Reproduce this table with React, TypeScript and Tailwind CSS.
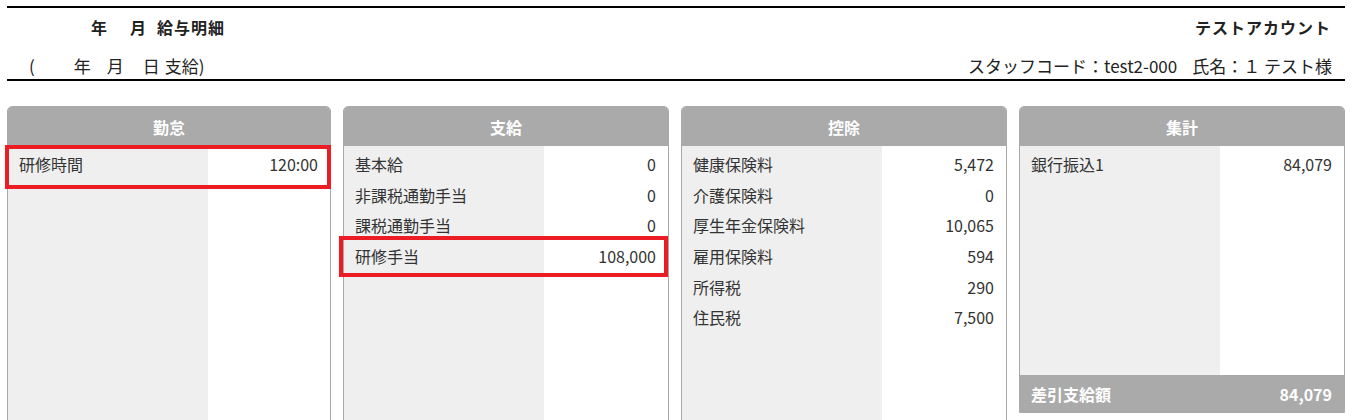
import React from "react";

type Row = { label: string; value: string };

const ROW_H = "h-[30.6px]";

function Card({
  title,
  rows,
  tall = true,
  footer,
  highlight,
}: {
  title: string;
  rows: Row[];
  tall?: boolean;
  footer?: Row;
  highlight?: React.ReactNode;
}) {
  return (
    <div className="relative">
      <div
        className={`flex flex-col border border-[#aaaaaa] rounded-t-[5px] overflow-hidden ${
          tall ? "h-[340px]" : "h-[307px]"
        }`}
      >
        <div className="h-[39px] shrink-0 bg-[#aaaaaa] flex items-center justify-center text-white font-bold text-[16px]">
          {title}
        </div>
        <div className="flex flex-1 min-h-0">
          <div className="w-[200px] shrink-0 bg-[#efefef] pt-[3px] pl-[11px]">
            {rows.map((r) => (
              <div key={r.label} className={`${ROW_H} flex items-center`}>
                {r.label}
              </div>
            ))}
          </div>
          <div className="flex-1 bg-white pt-[3px] pr-[12px]">
            {rows.map((r) => (
              <div key={r.label} className={`${ROW_H} flex items-center justify-end`}>
                {r.value}
              </div>
            ))}
          </div>
        </div>
        {footer && (
          <div className="h-[37px] shrink-0 bg-[#aaaaaa] flex items-center justify-between pl-[11px] pr-[12px] text-white font-bold">
            <span>{footer.label}</span>
            <span>{footer.value}</span>
          </div>
        )}
      </div>
      {highlight}
    </div>
  );
}

export default function App() {
  return (
    <div className="w-[1353px] h-[420px] overflow-hidden bg-white font-['Noto_Sans_CJK_JP',sans-serif] text-[#333333] text-[16px] pl-[7px] pr-[8px] pt-[6px]">
      <div className="border-t-2 border-b-2 border-black">
        <div className="h-[38px] flex items-center justify-between pr-[14px] font-bold text-[16px] tracking-[1px] text-[#222222]">
          <div className="flex pl-[84px]">
            <span>年</span>
            <span className="w-[22px]" />
            <span>月</span>
            <span className="w-[10px]" />
            <span>給与明細</span>
          </div>
          <div>テストアカウント</div>
        </div>
        <div className="h-[33px] flex items-center justify-between pr-[13px] pt-[6px] text-[17px] text-[#222222]">
          <div className="flex pl-[22px]">
            <span>(</span>
            <span className="w-[39px]" />
            <span>年</span>
            <span className="w-[16px]" />
            <span>月</span>
            <span className="w-[19px]" />
            <span>日</span>
            <span className="w-[5px]" />
            <span>支給)</span>
          </div>
          <div className="flex items-center">
            <span>スタッフコード：test2-000</span>
            <span className="w-[15px]" />
            <span>氏名：１ テスト様</span>
          </div>
        </div>
      </div>

      <div className="grid grid-cols-[324px_326px_326px_326px] gap-x-[12px] mt-[25px]">
        <Card
          title="勤怠"
          rows={[{ label: "研修時間", value: "120:00" }]}
          highlight={
            <div className="absolute left-[-2px] top-[39px] w-[326px] h-[44px] border-[4px] border-[#ec1c24]" />
          }
        />
        <Card
          title="支給"
          rows={[
            { label: "基本給", value: "0" },
            { label: "非課税通勤手当", value: "0" },
            { label: "課税通勤手当", value: "0" },
            { label: "研修手当", value: "108,000" },
          ]}
          highlight={
            <div className="absolute left-[-4px] top-[130px] w-[329px] h-[41px] border-[4px] border-[#ec1c24]" />
          }
        />
        <Card
          title="控除"
          rows={[
            { label: "健康保険料", value: "5,472" },
            { label: "介護保険料", value: "0" },
            { label: "厚生年金保険料", value: "10,065" },
            { label: "雇用保険料", value: "594" },
            { label: "所得税", value: "290" },
            { label: "住民税", value: "7,500" },
          ]}
        />
        <Card
          title="集計"
          tall={false}
          rows={[{ label: "銀行振込1", value: "84,079" }]}
          footer={{ label: "差引支給額", value: "84,079" }}
        />
      </div>
    </div>
  );
}
